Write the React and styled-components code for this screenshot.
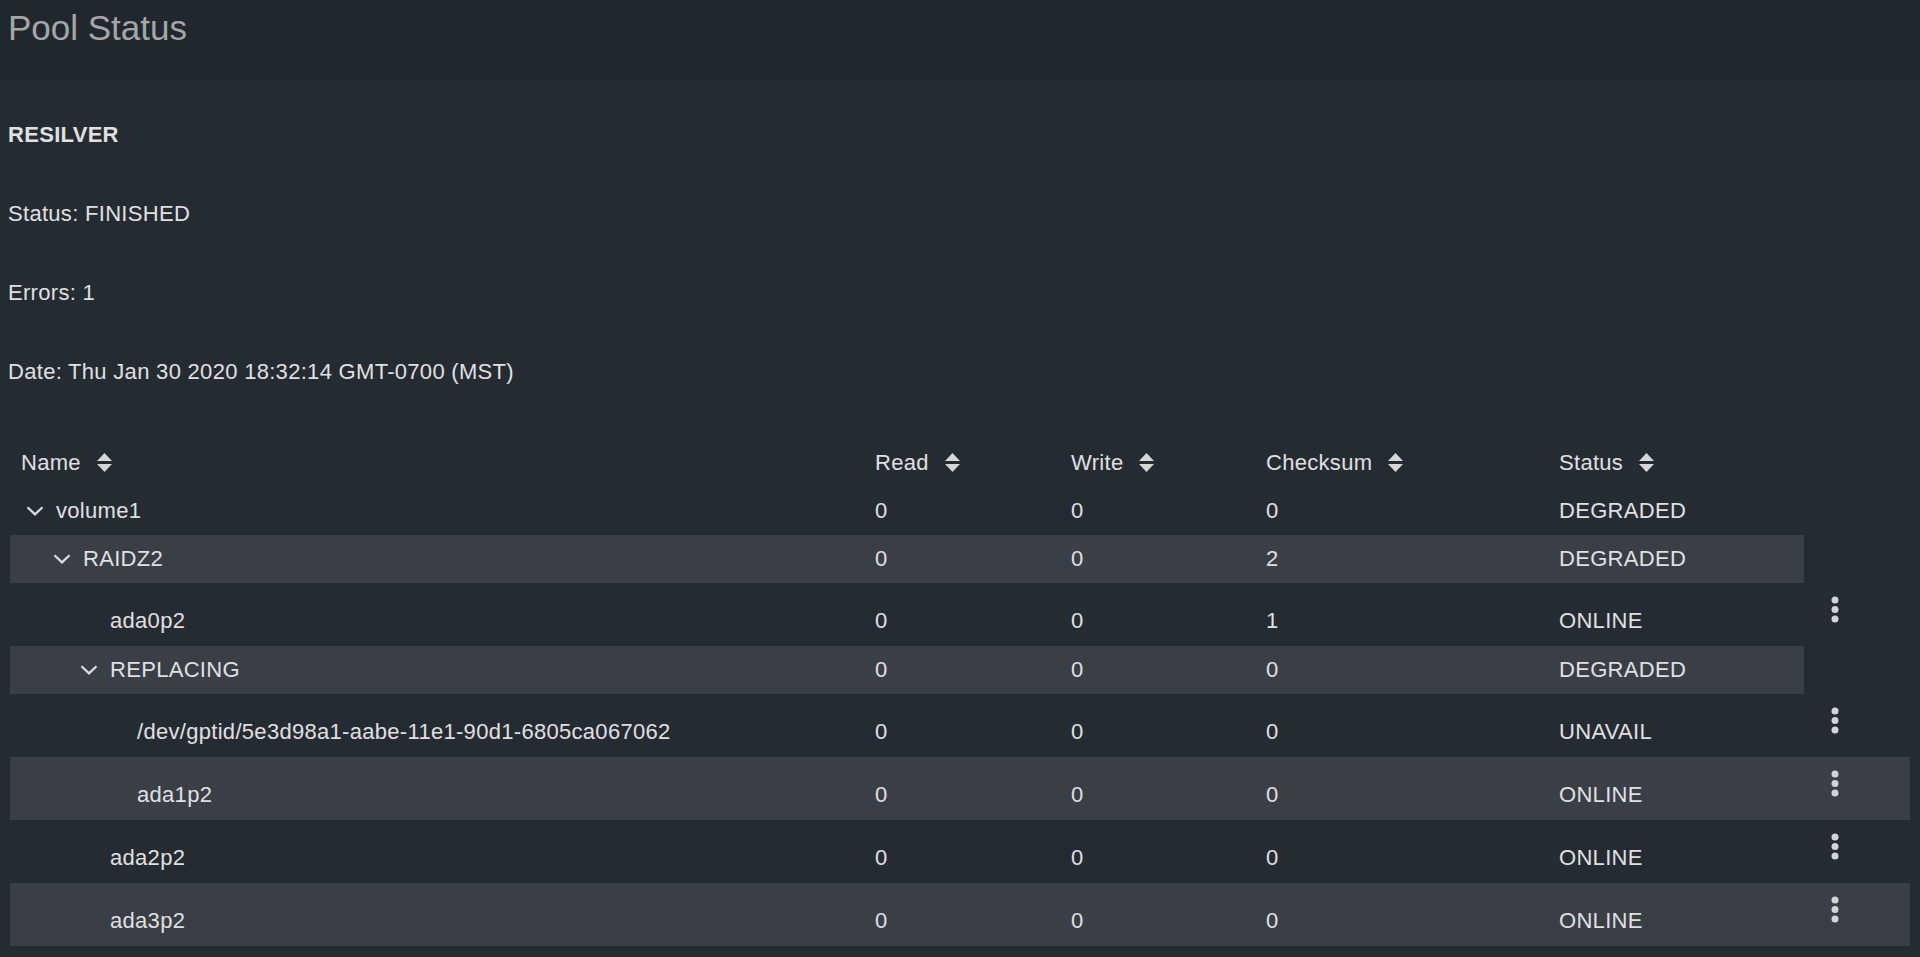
import React from 'react';
import styled, { createGlobalStyle } from 'styled-components';

const GlobalStyle = createGlobalStyle`
  html, body {
    margin: 0;
    padding: 0;
    background: #252b33;
    font-family: "Liberation Sans", Arial, sans-serif;
    color: #e0e0e0;
  }
`;

const rows = [
  { name: 'volume1', level: 0, group: true, read: 0, write: 0, checksum: 0, status: 'DEGRADED' },
  { name: 'RAIDZ2', level: 1, group: true, read: 0, write: 0, checksum: 2, status: 'DEGRADED' },
  { name: 'ada0p2', level: 2, group: false, read: 0, write: 0, checksum: 1, status: 'ONLINE' },
  { name: 'REPLACING', level: 2, group: true, read: 0, write: 0, checksum: 0, status: 'DEGRADED' },
  { name: '/dev/gptid/5e3d98a1-aabe-11e1-90d1-6805ca067062', level: 3, group: false, read: 0, write: 0, checksum: 0, status: 'UNAVAIL' },
  { name: 'ada1p2', level: 3, group: false, read: 0, write: 0, checksum: 0, status: 'ONLINE' },
  { name: 'ada2p2', level: 2, group: false, read: 0, write: 0, checksum: 0, status: 'ONLINE' },
  { name: 'ada3p2', level: 2, group: false, read: 0, write: 0, checksum: 0, status: 'ONLINE' },
];

const columns = '854px 196px 195px 293px 256px 106px';

const PageHeader = styled.header`
  height: 80px;
  box-sizing: border-box;
  background: #20272f;
  padding: 11px 0 0 8px;
`;

const Title = styled.h1`
  margin: 0;
  font-size: 35px;
  line-height: 34px;
  font-weight: 400;
  color: #a6a6a6;
`;

const Content = styled.main`
  padding: 42px 10px 0 10px;
`;

const Info = styled.section`
  display: flex;
  flex-direction: column;
  gap: 53px;
  margin-left: -2px;
`;

const InfoLine = styled.div`
  font-size: 22px;
  line-height: 26px;
  letter-spacing: 0.3px;
  font-weight: ${(p) => (p.$bold ? 700 : 400)};
  color: #e0e0e0;
`;

const Table = styled.div`
  margin-top: 53px;
  width: 1900px;
`;

const HeaderRow = styled.div`
  display: grid;
  grid-template-columns: ${columns};
  height: 49px;
`;

const HeaderCell = styled.div`
  display: flex;
  align-items: center;
  padding-left: 11px;
  font-size: 22px;
  letter-spacing: 0.3px;
  color: #e0e0e0;
`;

const SortIcon = styled.svg`
  margin-left: 16px;
  flex-shrink: 0;
`;

const Row = styled.div`
  display: grid;
  grid-template-columns: ${columns};
  height: ${(p) => (p.$group ? '48px' : '63px')};
`;

const Cell = styled.div`
  display: flex;
  align-items: center;
  box-sizing: border-box;
  padding-left: 11px;
  padding-top: ${(p) => (p.$group ? '0' : '12px')};
  font-size: 22px;
  letter-spacing: 0.3px;
  color: #e0e0e0;
  white-space: nowrap;
  background: ${(p) => (p.$striped ? '#393e47' : 'transparent')};
`;

const NameCell = styled(Cell)`
  padding-left: ${(p) => 11 + p.$level * 27}px;
`;

const Toggle = styled.span`
  display: flex;
  align-items: center;
  width: 35px;
  flex-shrink: 0;
  padding-left: 5px;
  box-sizing: border-box;
`;

const ActionCell = styled.div`
  box-sizing: border-box;
  padding: 13px 0 0 27px;
  background: ${(p) => (p.$striped ? '#393e47' : 'transparent')};
`;

const MenuButton = styled.button`
  display: block;
  border: 0;
  padding: 0;
  background: none;
  cursor: pointer;
`;

const Sort = () => (
  <SortIcon width="15" height="19" viewBox="0 0 15 19">
    <path d="M0 8 L7.5 0 L15 8 Z" fill="#d6d6d6" />
    <path d="M0 11 L7.5 19 L15 11 Z" fill="#d6d6d6" />
  </SortIcon>
);

const Chevron = () => (
  <svg width="18" height="10" viewBox="0 0 18 10">
    <path d="M1.5 1.2 L9 8.4 L16.5 1.2" fill="none" stroke="#dcdcdc" strokeWidth="2.2" />
  </svg>
);

const Dots = () => (
  <svg width="8" height="27" viewBox="0 0 8 27">
    <circle cx="4" cy="4" r="3.5" fill="#d4d4d4" />
    <circle cx="4" cy="13.5" r="3.5" fill="#d4d4d4" />
    <circle cx="4" cy="23" r="3.5" fill="#d4d4d4" />
  </svg>
);

const App = () => {
  return (
    <>
      <GlobalStyle />
      <PageHeader>
        <Title>Pool Status</Title>
      </PageHeader>
      <Content>
        <Info>
          <InfoLine $bold>RESILVER</InfoLine>
          <InfoLine>Status: FINISHED</InfoLine>
          <InfoLine>Errors: 1</InfoLine>
          <InfoLine>Date: Thu Jan 30 2020 18:32:14 GMT-0700 (MST)</InfoLine>
        </Info>
        <Table>
          <HeaderRow>
            {['Name', 'Read', 'Write', 'Checksum', 'Status'].map((h) => (
              <HeaderCell key={h}>
                {h}
                <Sort />
              </HeaderCell>
            ))}
            <div />
          </HeaderRow>
          {rows.map((row, i) => {
            const striped = i % 2 === 1;
            return (
              <Row key={row.name} $group={row.group}>
                <NameCell $level={row.level} $group={row.group} $striped={striped}>
                  <Toggle>{row.group && <Chevron />}</Toggle>
                  {row.name}
                </NameCell>
                <Cell $group={row.group} $striped={striped}>{row.read}</Cell>
                <Cell $group={row.group} $striped={striped}>{row.write}</Cell>
                <Cell $group={row.group} $striped={striped}>{row.checksum}</Cell>
                <Cell $group={row.group} $striped={striped}>{row.status}</Cell>
                {row.group ? (
                  <div />
                ) : (
                  <ActionCell $striped={striped}>
                    <MenuButton aria-label="more">
                      <Dots />
                    </MenuButton>
                  </ActionCell>
                )}
              </Row>
            );
          })}
        </Table>
      </Content>
    </>
  );
};

export default App;
